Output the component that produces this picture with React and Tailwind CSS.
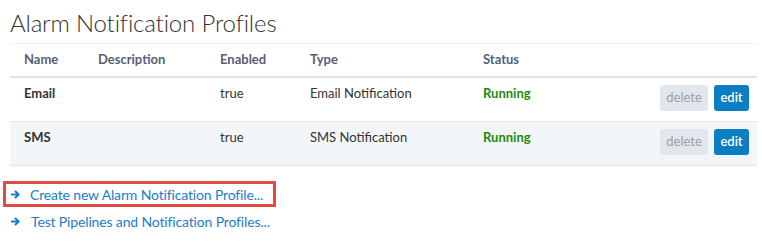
import React from "react";

function Arrow() {
  return (
    <svg width="9" height="9" viewBox="0 0 10 10" className="shrink-0">
      <path d="M0.5 5 H8 M5 1.6 L8.6 5 L5 8.4" fill="none" stroke="#1f7ccb" strokeWidth="2.2" strokeLinecap="round" strokeLinejoin="round" />
    </svg>
  );
}

const rows = [
  { name: "Email", enabled: "true", type: "Email Notification", status: "Running" },
  { name: "SMS", enabled: "true", type: "SMS Notification", status: "Running" },
];

export default function App() {
  return (
    <div className="w-[762px] h-[249px] bg-white pl-[10px] pr-[5px] pt-[8px] text-[#333]" style={{ fontFamily: "Lato, 'Noto Sans', sans-serif" }}>
      <h1 className="text-[24px] leading-[30px] font-light text-[#333] tracking-[-0.15px]">Alarm Notification Profiles</h1>
      <div className="mt-[5px] border-t border-[#eef0f3]">
        <div className="flex h-[34px] items-center border-b-2 border-[#dfe4ea] text-[13px] font-bold text-[#566074]">
          <div className="w-[74px] pl-[14px] box-content">Name</div>
          <div className="w-[122px]">Description</div>
          <div className="w-[90px]">Enabled</div>
          <div className="w-[173px]">Type</div>
          <div>Status</div>
        </div>
        {rows.map((r, i) => (
          <div key={r.name} className={`flex h-[44px] text-[13px] border-b border-[#e3e7ec] ${i === 1 ? "bg-[#f3f6f9]" : "bg-white"}`}>
            <div className="w-[74px] pl-[14px] box-content pt-[6px] font-bold text-[#333]">{r.name}</div>
            <div className="w-[122px]"></div>
            <div className="w-[90px] pt-[6px]">{r.enabled}</div>
            <div className="w-[173px] pt-[6px]">{r.type}</div>
            <div className="flex-1 pt-[6px] font-bold text-[#1e8a0e]">{r.status}</div>
            <div className="flex gap-[6px] pt-[7px] pr-[8px]">
              <button className="h-[26px] w-[48px] rounded-[3px] bg-[#e2e7ed] text-[13px] text-[#9aa0a6]">delete</button>
              <button className="h-[26px] w-[35px] rounded-[3px] bg-[#0a7ec2] text-[13px] font-semibold text-white">edit</button>
            </div>
          </div>
        ))}
      </div>
      <div className="mt-[15px] -ml-[7px] w-[273px] h-[26px] border-[3px] border-[#df4b47] flex items-center pl-[5px] gap-[10px]">
        <Arrow />
        <span className="text-[14px] text-[#1f7ccb] tracking-[-0.15px]">Create new Alarm Notification Profile...</span>
      </div>
      <div className="mt-[4px] ml-[1px] flex items-center gap-[11px] h-[20px]">
        <Arrow />
        <span className="text-[14px] text-[#1f7ccb] tracking-[-0.15px]">Test Pipelines and Notification Profiles...</span>
      </div>
    </div>
  );
}
